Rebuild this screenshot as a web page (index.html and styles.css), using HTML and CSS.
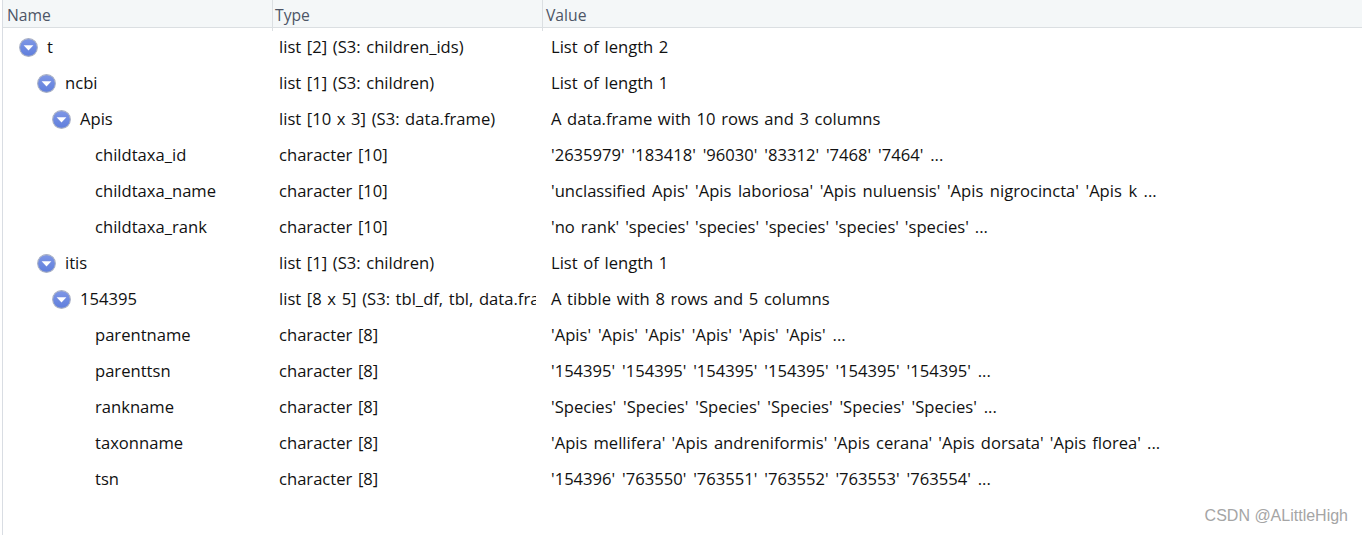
FILE: index.html
```html
<!DOCTYPE html>
<html lang="en">
<head>
<meta charset="utf-8">
<title>Object explorer</title>
<link rel="stylesheet" href="styles.css">
</head>
<body>
<svg class="defs" width="0" height="0" aria-hidden="true">
  <defs>
    <linearGradient id="ball" x1="0" y1="0" x2="0" y2="1">
      <stop offset="0" stop-color="#7f97e6"/>
      <stop offset="1" stop-color="#5f7edc"/>
    </linearGradient>
    <symbol id="tw" viewBox="0 0 18 18">
      <circle cx="9" cy="9" r="8.4" fill="url(#ball)" stroke="#a9b0c4" stroke-width="1"/>
      <path d="M4.4 6.8h9.2L9 11.8z" fill="#fff"/>
    </symbol>
  </defs>
</svg>
<main class="explorer">
  <div class="head">
    <div class="hcell hname">Name</div>
    <div class="hcell htype">Type</div>
    <div class="hcell hvalue">Value</div>
  </div>
  <div class="row">
    <div class="name l0"><svg class="tw"><use href="#tw"/></svg><span>t</span></div>
    <div class="type">list [2] (S3: children_ids)</div>
    <div class="value">List of length 2</div>
  </div>
  <div class="row">
    <div class="name l1"><svg class="tw"><use href="#tw"/></svg><span>ncbi</span></div>
    <div class="type">list [1] (S3: children)</div>
    <div class="value">List of length 1</div>
  </div>
  <div class="row">
    <div class="name l2"><svg class="tw"><use href="#tw"/></svg><span>Apis</span></div>
    <div class="type">list [10 x 3] (S3: data.frame)</div>
    <div class="value">A data.frame with 10 rows and 3 columns</div>
  </div>
  <div class="row">
    <div class="name leaf">childtaxa_id</div>
    <div class="type">character [10]</div>
    <div class="value vec">'2635979' '183418' '96030' '83312' '7468' '7464' ...</div>
  </div>
  <div class="row">
    <div class="name leaf">childtaxa_name</div>
    <div class="type">character [10]</div>
    <div class="value mixed">'unclassified Apis' 'Apis laboriosa' 'Apis nuluensis' 'Apis nigrocincta' 'Apis k ...</div>
  </div>
  <div class="row">
    <div class="name leaf">childtaxa_rank</div>
    <div class="type">character [10]</div>
    <div class="value rank">'no rank' 'species' 'species' 'species' 'species' 'species' ...</div>
  </div>
  <div class="row">
    <div class="name l1"><svg class="tw"><use href="#tw"/></svg><span>itis</span></div>
    <div class="type">list [1] (S3: children)</div>
    <div class="value">List of length 1</div>
  </div>
  <div class="row">
    <div class="name l2"><svg class="tw"><use href="#tw"/></svg><span>154395</span></div>
    <div class="type">list [8 x 5] (S3: tbl_df, tbl, data.frame)</div>
    <div class="value">A tibble with 8 rows and 5 columns</div>
  </div>
  <div class="row">
    <div class="name leaf">parentname</div>
    <div class="type">character [8]</div>
    <div class="value vec">'Apis' 'Apis' 'Apis' 'Apis' 'Apis' 'Apis' ...</div>
  </div>
  <div class="row">
    <div class="name leaf">parenttsn</div>
    <div class="type">character [8]</div>
    <div class="value vec">'154395' '154395' '154395' '154395' '154395' '154395' ...</div>
  </div>
  <div class="row">
    <div class="name leaf">rankname</div>
    <div class="type">character [8]</div>
    <div class="value vec">'Species' 'Species' 'Species' 'Species' 'Species' 'Species' ...</div>
  </div>
  <div class="row">
    <div class="name leaf">taxonname</div>
    <div class="type">character [8]</div>
    <div class="value taxon">'Apis mellifera' 'Apis andreniformis' 'Apis cerana' 'Apis dorsata' 'Apis florea' ...</div>
  </div>
  <div class="row">
    <div class="name leaf">tsn</div>
    <div class="type">character [8]</div>
    <div class="value vec">'154396' '763550' '763551' '763552' '763553' '763554' ...</div>
  </div>
</main>
<div class="mark">CSDN @ALittleHigh</div>
</body>
</html>
```
FILE: styles.css
```css
* { box-sizing: border-box; }
html, body { margin: 0; height: 100%; }
body {
  background: #fff;
  color: #111;
  font-family: "Open Sans", "Noto Sans", sans-serif;
  font-size: 16.6px;
  word-spacing: 1.3px;
  overflow: hidden;
  position: relative;
}
.defs { display: block; height: 0; }
.explorer {
  height: 535px;
  margin-left: 2px;
  border-left: 1px solid #d9dde3;
}
.head {
  display: grid;
  grid-template-columns: 269px 270px 1fr;
  height: 28px;
  margin-bottom: 1px;
  background: #f4f7f8;
  border-bottom: 1px solid #dbdfe2;
  color: #4d5566;
  font-size: 15.7px;
  line-height: 31px;
}
.hcell { padding-left: 4px; white-space: nowrap; }
.htype, .hvalue { border-left: 1px solid #dbdfe2; padding-left: 3px; }
.htype { padding-left: 2px; }
.row {
  display: grid;
  grid-template-columns: 270px 271px 1fr;
  height: 36px;
  line-height: 36px;
}
.name { display: flex; align-items: center; white-space: nowrap; }
.type { padding-left: 6px; overflow: hidden; white-space: nowrap; margin-right: 8px; }
.value { padding-left: 7px; white-space: nowrap; }
.vec { word-spacing: 2.6px; }
.mixed { word-spacing: 2.2px; }
.taxon { word-spacing: 1.8px; }
.rank { word-spacing: 1.6px; }
.tw { width: 19px; height: 19px; flex: none; margin-right: 9px; }
.l0 { padding-left: 16px; }
.l1 { padding-left: 34px; }
.l2 { padding-left: 49px; }
.leaf { padding-left: 92px; }
.mark {
  position: absolute;
  right: 14px;
  top: 507px;
  color: #a5a5a5;
  font-family: "Liberation Sans", sans-serif;
  font-size: 16px;
  word-spacing: 0;
  line-height: 18px;
}
```
